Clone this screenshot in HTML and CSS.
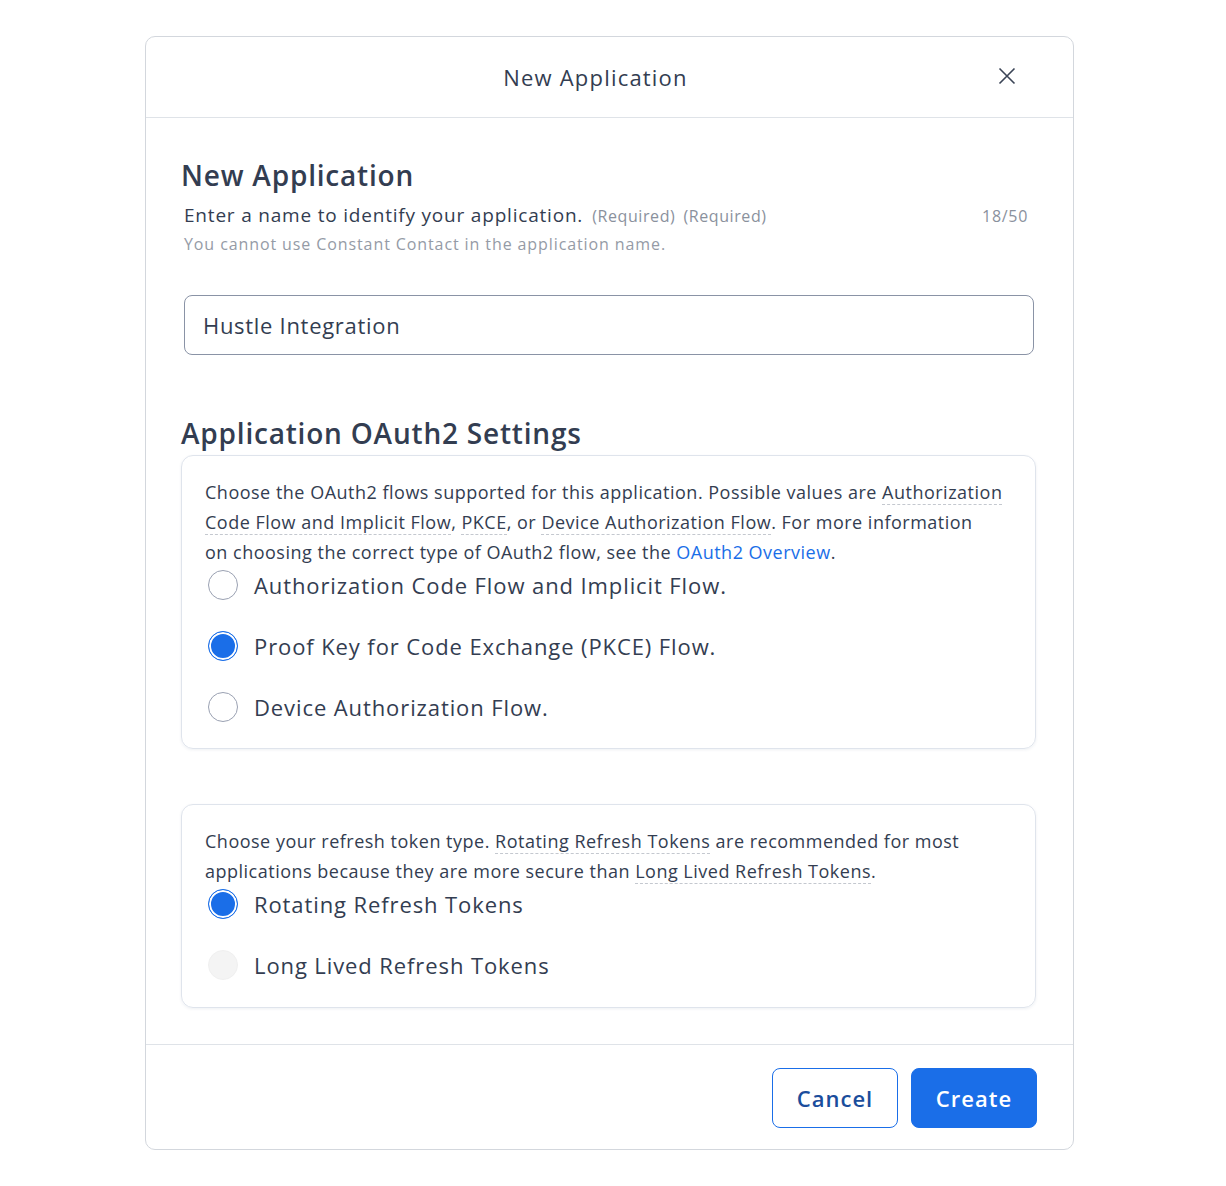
FILE: index.html
```html
<!DOCTYPE html>
<html lang="en">
<head>
    <meta charset="UTF-8">
    <meta name="viewport" content="width=device-width, initial-scale=1.0">
    <title>New Application</title>
    <link rel="stylesheet" href="styles.css">
</head>
<body>
    <div class="modal">
        <div class="modal-header">
            <h2 class="modal-title">New Application</h2>
            <button class="btn-close" type="button" aria-label="Close">
                <svg width="18" height="18" viewBox="0 0 18 18"><path d="M1.5 1.5 L16.5 16.5 M16.5 1.5 L1.5 16.5" stroke="#3b4456" stroke-width="1.6" fill="none"/></svg>
            </button>
        </div>

        <div class="modal-body">
            <h3 class="section-title">New Application</h3>
            <div class="field-label">
                <span class="label-text">Enter a name to identify your application.</span>
                <span class="req">(Required)</span>
                <span class="req">(Required)</span>
                <span class="counter">18/50</span>
            </div>
            <p class="help">You cannot use Constant Contact in the application name.</p>
            <input class="text-input" type="text" value="Hustle Integration">

            <h3 class="section-title oauth-title">Application OAuth2 Settings</h3>
            <div class="card">
                <p class="card-text">Choose the OAuth2 flows supported for this application. Possible values are <span class="term">Authorization Code Flow and Implicit Flow</span>, <span class="term">PKCE</span>, or <span class="term">Device Authorization Flow</span>. For more information on&nbsp;choosing the correct type of OAuth2 flow, see the <a href="#" class="link">OAuth2 Overview</a>.</p>
                <label class="radio"><input type="radio" name="flow"><span class="dot"></span>Authorization Code Flow and Implicit Flow.</label>
                <label class="radio"><input type="radio" name="flow" checked><span class="dot"></span>Proof Key for Code Exchange (PKCE) Flow.</label>
                <label class="radio"><input type="radio" name="flow"><span class="dot"></span>Device Authorization Flow.</label>
            </div>

            <div class="card card-refresh">
                <p class="card-text">Choose your refresh token type. <span class="term">Rotating Refresh Tokens</span> are recommended for most applications because they are more secure than <span class="term">Long Lived Refresh Tokens</span>.</p>
                <label class="radio"><input type="radio" name="refresh" checked><span class="dot"></span>Rotating Refresh Tokens</label>
                <label class="radio"><input type="radio" name="refresh" disabled><span class="dot"></span>Long Lived Refresh Tokens</label>
            </div>
        </div>

        <div class="modal-footer">
            <button class="btn btn-outline" type="button">Cancel</button>
            <button class="btn btn-primary" type="button">Create</button>
        </div>
    </div>
</body>
</html>
```

FILE: styles.css
```css
body{
    margin: 0;
    background: #ffffff;
    font-family: "Open Sans", "Noto Sans", sans-serif;
    color: #333d51;
}
.modal{
    width: 927px;
    margin: 36px 0 0 145px;
    border: 1px solid #d3d7dd;
    border-radius: 10px;
    background: #fff;
}
.modal-header{
    height: 80px;
    padding-right: 28px;
    border-bottom: 1px solid #dfe3e8;
    display: flex;
    align-items: center;
    justify-content: center;
    position: relative;
}
.modal-title{
    margin: 0;
    font-size: 22px;
    font-weight: 500;
    letter-spacing: 1.2px;
}
.btn-close{
    position: absolute;
    right: 57px;
    top: 30px;
    width: 18px;
    height: 18px;
    padding: 0;
    border: 0;
    background: none;
    display: flex;
}
.modal-body{
    padding: 38px 35px 36px;
}
.section-title{
    margin: 0;
    font-size: 28px;
    font-weight: 600;
    line-height: 38px;
    letter-spacing: 0.8px;
}
.field-label{
    display: flex;
    align-items: baseline;
    margin: 6px 10px 0 3px;
}
.label-text{
    font-size: 19px;
    line-height: 30px;
    letter-spacing: 0.8px;
    margin-right: 9px;
}
.req{
    font-size: 16px;
    letter-spacing: 0.6px;
    color: #8a919d;
    margin-right: 8px;
}
.counter{
    margin-left: auto;
    font-size: 16px;
    letter-spacing: 0.7px;
    color: #8a919d;
}
.help{
    margin: 0 0 0 3px;
    font-size: 16px;
    line-height: 28px;
    letter-spacing: 0.9px;
    color: #959ba6;
}
.text-input{
    display: block;
    box-sizing: border-box;
    width: 850px;
    height: 60px;
    margin: 37px 0 0 3px;
    padding: 0 18px;
    border: 1px solid #8a93a6;
    border-radius: 8px;
    font-family: inherit;
    font-size: 22px;
    letter-spacing: 0.7px;
    color: #333d51;
}
.oauth-title{
    margin-top: 59px;
}
.card{
    width: 855px;
    margin-top: 3px;
    padding: 21px 23px 26px;
    box-sizing: border-box;
    border: 1px solid #dfe4ec;
    border-radius: 12px;
    box-shadow: 0 1px 3px rgba(40, 60, 100, 0.08);
}
.card-refresh{
    margin-top: 55px;
    padding-bottom: 27px;
}
.card-text{
    margin: 0 0 3px;
    font-size: 18px;
    line-height: 30px;
    letter-spacing: 0.5px;
}
.term{
    border-bottom: 1px dashed #c4c8cf;
}
.link{
    color: #1a6ee8;
    text-decoration: none;
}
.radio{
    display: flex;
    align-items: center;
    height: 30px;
    font-size: 22px;
    letter-spacing: 0.9px;
    cursor: pointer;
}
.radio + .radio{
    margin-top: 31px;
}
.radio input{
    display: none;
}
.dot{
    width: 30px;
    height: 30px;
    margin: 0 16px 0 3px;
    border: 1px solid #9aa1b2;
    border-radius: 50%;
    box-sizing: border-box;
    flex: none;
}
.radio input:checked + .dot{
    border: 1.5px solid #1a6ee8;
    background: #1a6ee8;
    box-shadow: inset 0 0 0 2px #fff;
}
.radio input:disabled + .dot{
    border-color: #f0f0f0;
    background: #f4f4f4;
}
.modal-footer{
    border-top: 1px solid #dfe3e8;
    display: flex;
    justify-content: flex-end;
    gap: 13px;
    padding: 23px 36px 21px;
}
.btn{
    height: 60px;
    border-radius: 8px;
    font-family: inherit;
    font-size: 22px;
    font-weight: 600;
    letter-spacing: 1px;
}
.btn-outline{
    width: 126px;
    border: 1px solid #1a6ee8;
    background: #fff;
    color: #1a4d9c;
}
.btn-primary{
    width: 126px;
    border: 1px solid #1a6ee8;
    background: #1a6ee8;
    color: #fff;
}
```
